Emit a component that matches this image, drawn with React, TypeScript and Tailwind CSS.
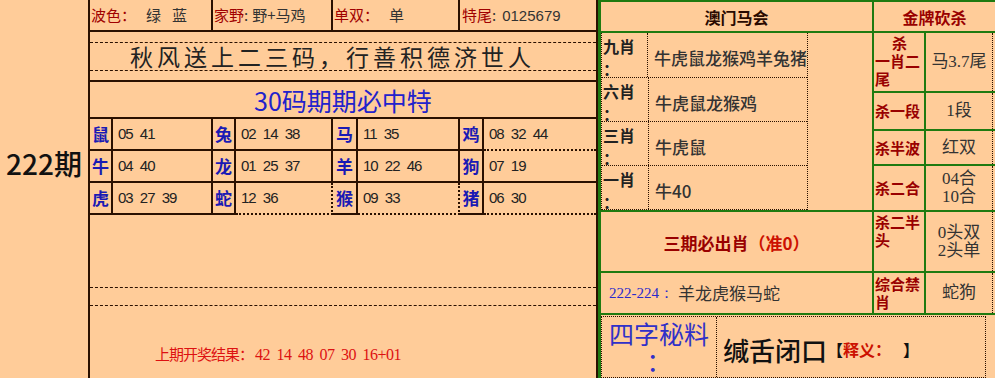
const LINE = "border-[#2a1000]";

const zodiacRows = [
  ["鼠", "05 41", "兔", "02 14 38", "马", "11 35", "鸡", "08 32 44"],
  ["牛", "04 40", "龙", "01 25 37", "羊", "10 22 46", "狗", "07 19"],
  ["虎", "03 27 39", "蛇", "12 36", "猴", "09 33", "猪", "06 30"],
];

const dottedCells = new Set(["0-7", "2-3", "2-7", "2-5"]);

const shengxiao = [
  { label: "九肖", value: "牛虎鼠龙猴鸡羊兔猪", h: "h-[45px]" },
  { label: "六肖", value: "牛虎鼠龙猴鸡", h: "h-[44px]" },
  { label: "三肖", value: "牛虎鼠", h: "h-[44px]" },
  { label: "一肖", value: "牛40", h: "h-[44px]" },
];

export default function App() {
  return (
    <div className="w-[995px] h-[378px] bg-[#FFCC99] flex overflow-hidden font-['Noto_Sans_CJK_SC',sans-serif] text-[#222]">
      {/* left issue column */}
      <div className={`w-[90px] shrink-0 border-r-2 ${LINE}`}>
        <div className="mt-[149px] text-center text-[28px] leading-[28px] font-medium text-[#111]">222期</div>
      </div>

      {/* middle panel */}
      <div className={`w-[508px] shrink-0 border-r-2 ${LINE} flex flex-col`}>
        <div className={`h-[32px] shrink-0 border-b-2 ${LINE} grid grid-cols-[123px_120px_127px_1fr] text-[15px] leading-[30px] whitespace-nowrap`}>
          <div className={`border-r-2 ${LINE} pl-[1px]`}>
            <span className="text-[#a00000]">波色：</span>
            <span className="ml-[10px] text-[#333]">绿</span>
            <span className="ml-[11px] text-[#333]">蓝</span>
          </div>
          <div className={`border-r-2 ${LINE} pl-[1px]`}>
            <span className="text-[#a00000]">家野</span>
            <span className="text-[#333]">:</span>
            <span className="ml-[4px] text-[#333]">野+马鸡</span>
          </div>
          <div className={`border-r-2 ${LINE} pl-[1px]`}>
            <span className="text-[#a00000]">单双：</span>
            <span className="ml-[10px] text-[#333]">单</span>
          </div>
          <div className="pl-[2px]">
            <span className="text-[#a00000]">特尾</span>
            <span className="text-[#333]">:</span>
            <span className="ml-[6px] text-[#333] font-['Liberation_Sans',sans-serif]">0125679</span>
          </div>
        </div>

        <div className={`h-[50px] shrink-0 border-b-2 ${LINE} pt-[10px]`}>
          <div className={`h-[29px] border-y border-dashed ${LINE} pl-[40px] text-[23px] leading-[27px] tracking-[4px] text-[#222] whitespace-nowrap`}>
            秋风送上二三码，行善积德济世人
          </div>
        </div>

        <div className={`h-[37px] shrink-0 border-b-2 ${LINE} flex items-center justify-center text-[25px] leading-[30px] text-[#2222cc]`}>
          30码期期必中特
        </div>

        <div className="grid grid-cols-[23px_100px_23px_97px_25px_102px_24px_1fr] shrink-0">
          {zodiacRows.map((row, r) =>
            row.map((cell, c) => {
              const isName = c % 2 === 0;
              const last = c === 7;
              const dotted = dottedCells.has(`${r}-${c}`);
              return (
                <div
                  key={`${r}-${c}`}
                  className={`h-[32px] border-b-2 ${last ? "" : "border-r-2"} ${LINE} ${dotted ? "border-dotted" : ""} flex items-center ${
                    isName
                      ? "justify-center text-[17px] font-bold text-[#1a1ab4]"
                      : "pl-[5px] text-[15px] text-[#222] font-['Liberation_Sans',sans-serif] tracking-[-1px] [word-spacing:4px] whitespace-nowrap"
                  }`}
                >
                  {cell}
                </div>
              );
            })
          )}
        </div>

        <div className="flex-1 pt-[72px]">
          <div className={`h-[19px] border-y border-dashed ${LINE}`} />
          <div className="mt-[40px] pl-[65px] text-[15px] leading-[16px] text-[#dd1111] whitespace-nowrap">
            <span className="tracking-[-1px]">上期开奖结果：</span>
            <span className="ml-[2px] font-['Liberation_Serif',serif] text-[16px] tracking-[-0.5px] [word-spacing:3px]">42 14 48 07 30 16+01</span>
          </div>
        </div>
      </div>

      {/* right panel */}
      <div className="w-[397px] shrink-0 border-l-[3px] border-t-2 border-[#1f7a10] flex flex-col">
        <div className="h-[31px] shrink-0 border-b-2 border-[#1f7a10] flex text-[16px] font-bold">
          <div className="w-[273px] border-r-2 border-[#1f7a10] flex items-center justify-center text-[#2a0a00]">澳门马会</div>
          <div className="flex-1 flex items-center justify-center text-[#990000]">金牌砍杀</div>
        </div>

        <div className="h-[282px] shrink-0 border-b-2 border-[#1f7a10] flex">
          {/* left column */}
          <div className="w-[273px] border-r-2 border-[#1f7a10] flex flex-col">
            <div className="h-[179px] shrink-0 border-b-2 border-[#1f7a10]">
              <div className="w-[207px] border-l border-r border-dotted border-[#2a1000]">
                {shengxiao.map((s, i) => (
                  <div key={i} className={`${s.h} flex border-b border-dotted border-[#2a1000]`}>
                    <div className="w-[47px] border-r border-dotted border-[#2a1000] pl-[1px] pt-[2px] text-[16px] leading-[23px] font-bold text-[#222] whitespace-nowrap">
                      {s.label}
                      <br />：
                    </div>
                    <div className="flex-1 flex items-center pl-[6px] pt-[6px] text-[17px] font-medium text-[#333] whitespace-nowrap">
                      {s.value}
                    </div>
                  </div>
                ))}
              </div>
            </div>
            <div className="h-[61px] shrink-0 border-b-2 border-[#1f7a10] flex items-center justify-center pt-[2px] text-[17px] font-bold whitespace-nowrap">
              <span className="text-[#990000]">三期必出肖</span>
              <span className="text-[#cc1100]">（准0）</span>
            </div>
            <div className="flex-1 flex items-center pl-[8px] whitespace-nowrap">
              <span className="text-[15px] text-[#2a2acc] font-['Liberation_Serif',serif]">222-224：</span>
              <span className="ml-[4px] text-[17px] text-[#333]">羊龙虎猴马蛇</span>
            </div>
          </div>

          {/* right column */}
          <div className="flex-1 flex flex-col text-[15px] leading-[18px] font-bold text-[#990000]">
            <Row h="h-[60px]" valueText="马3.7尾">
              <div className="w-full self-start pt-[1px] whitespace-nowrap">
                <div className="text-center">杀</div>
                <div>一肖二</div>
                <div>尾</div>
              </div>
            </Row>
            <Row h="h-[38px]" valueText="1段">
              <div>杀一段</div>
            </Row>
            <Row h="h-[35px]" valueText="红双">
              <div>杀半波</div>
            </Row>
            <Row h="h-[46px]" valueText={<>04合<br />10合</>}>
              <div>杀二合</div>
            </Row>
            <Row h="h-[61px]" valueText={<>0头双<br />2头单</>}>
              <div className="self-start pt-[1px] whitespace-nowrap">杀二半<br />头</div>
            </Row>
            <Row h="h-[40px]" valueText="蛇狗" last>
              <div className="self-start pt-[2px] whitespace-nowrap">综合禁<br />肖</div>
            </Row>
          </div>
        </div>

        {/* bottom box */}
        <div className="h-[62px] mr-[9px] mt-[1px] border border-dotted border-[#2a1000] flex">
          <div className="w-[115px] border-r border-dotted border-[#2a1000] text-center text-[25px] leading-[27px] pt-[3px] text-[#3030c8] whitespace-nowrap">
            四字秘料<br />：
          </div>
          <div className="flex-1 flex items-center pl-[6px] pt-[4px] whitespace-nowrap">
            <span className="text-[26px] font-medium text-[#111]">缄舌闭口</span>
            <span className="text-[16px] font-bold text-[#111]">【</span>
            <span className="text-[16px] font-bold text-[#cc1100]">释义：</span>
            <span className="ml-[12px] text-[16px] font-bold text-[#111]">】</span>
          </div>
        </div>
      </div>
    </div>
  );
}

function Row({
  h,
  children,
  valueText,
  last,
}: {
  h: string;
  children: React.ReactNode;
  valueText: React.ReactNode;
  last?: boolean;
}) {
  return (
    <div className={`${h} shrink-0 flex ${last ? "" : "border-b-2 border-[#1f7a10]"}`}>
      <div className="w-[52px] border-r-2 border-[#1f7a10] flex items-center pl-[1px]">{children}</div>
      <div className="flex-1 flex items-center justify-center text-center text-[17px] leading-[18px] font-normal text-[#333] font-['Liberation_Serif','Noto_Sans_CJK_SC',serif] border-r border-dotted border-[#2a1000] mr-[2px]">
        {valueText}
      </div>
    </div>
  );
}
